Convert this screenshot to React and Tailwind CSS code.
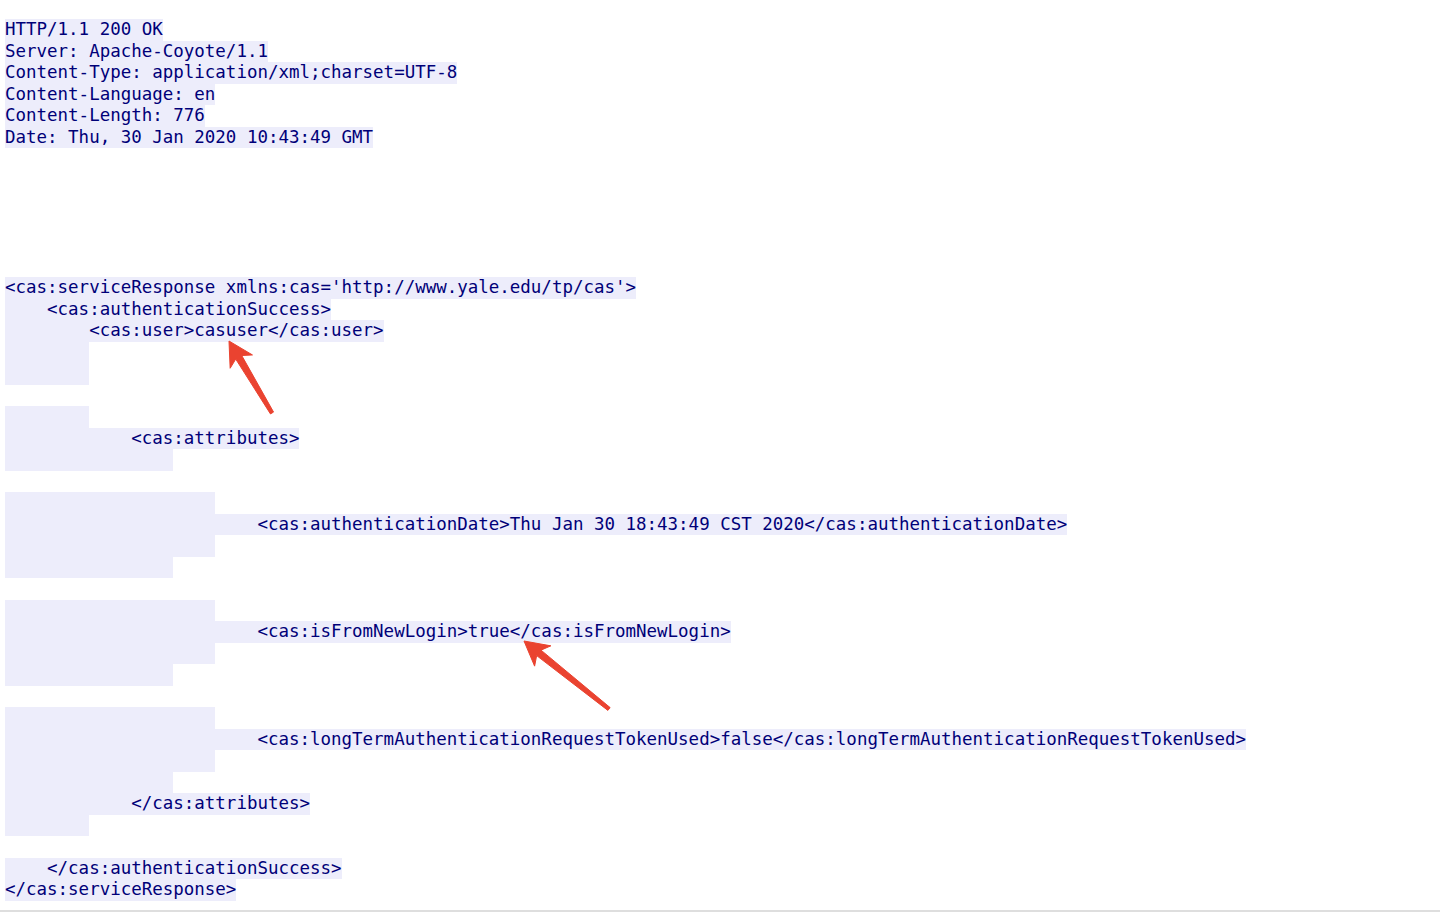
import React from 'react';

const sp = (n) => ' '.repeat(n);

// [text, highlighted]
const lines = [
  ['HTTP/1.1 200 OK', true],
  ['Server: Apache-Coyote/1.1', true],
  ['Content-Type: application/xml;charset=UTF-8', true],
  ['Content-Language: en', true],
  ['Content-Length: 776', true],
  ['Date: Thu, 30 Jan 2020 10:43:49 GMT', true],
  ['', false],
  ['', false],
  ['', false],
  ['', false],
  ['', false],
  ['', false],
  ["<cas:serviceResponse xmlns:cas='http://www.yale.edu/tp/cas'>", true],
  [sp(4) + '<cas:authenticationSuccess>', true],
  [sp(8) + '<cas:user>casuser</cas:user>', true],
  [sp(8), true],
  [sp(8), true],
  ['', false],
  [sp(8), true],
  [sp(12) + '<cas:attributes>', true],
  [sp(16), true],
  ['', false],
  [sp(20), true],
  [sp(24) + '<cas:authenticationDate>Thu Jan 30 18:43:49 CST 2020</cas:authenticationDate>', true],
  [sp(20), true],
  [sp(16), true],
  ['', false],
  [sp(20), true],
  [sp(24) + '<cas:isFromNewLogin>true</cas:isFromNewLogin>', true],
  [sp(20), true],
  [sp(16), true],
  ['', false],
  [sp(20), true],
  [sp(24) + '<cas:longTermAuthenticationRequestTokenUsed>false</cas:longTermAuthenticationRequestTokenUsed>', true],
  [sp(20), true],
  [sp(16), true],
  [sp(12) + '</cas:attributes>', true],
  [sp(8), true],
  ['', false],
  [sp(4) + '</cas:authenticationSuccess>', true],
  ['</cas:serviceResponse>', true],
];

// arrow polygon: tip, tail in page pixels
function arrowPoints(tip, tail, headLen = 24, headHalf = 13, neckHalf = 3.5, tailHalf = 1.8) {
  const dx = tail[0] - tip[0];
  const dy = tail[1] - tip[1];
  const len = Math.hypot(dx, dy);
  const ux = dx / len;
  const uy = dy / len;
  const px = -uy;
  const py = ux;
  const base = [tip[0] + ux * headLen, tip[1] + uy * headLen];
  const neck = [tip[0] + ux * (headLen - 5), tip[1] + uy * (headLen - 5)];
  const pts = [
    [tail[0] + px * tailHalf, tail[1] + py * tailHalf],
    [neck[0] + px * neckHalf, neck[1] + py * neckHalf],
    [base[0] + px * headHalf, base[1] + py * headHalf],
    tip,
    [base[0] - px * headHalf, base[1] - py * headHalf],
    [neck[0] - px * neckHalf, neck[1] - py * neckHalf],
    [tail[0] - px * tailHalf, tail[1] - py * tailHalf],
  ];
  return pts.map((p) => p.join(',')).join(' ');
}

const Arrows = () => (
  <svg className="absolute left-0 top-0 pointer-events-none" width="1440" height="912">
    <polygon points={arrowPoints([229, 341], [272, 413])} fill="#ea4330" strokeLinejoin="round" stroke="#ea4330" strokeWidth="1" />
    <polygon points={arrowPoints([524, 641], [609, 709])} fill="#ea4330" strokeLinejoin="round" stroke="#ea4330" strokeWidth="1" />
  </svg>
);

const App = () => {
  return (
    <div className="relative h-[912px] w-[1440px] bg-white flex flex-col overflow-hidden">
      <div className="flex-1 pt-[19px] pl-[5px] font-['DejaVu_Sans_Mono','Liberation_Mono',monospace] text-[17.48px] leading-[21.5px] text-[#000078]">
        {lines.map(([text, hl], i) => (
          <div
            key={i}
            className={hl ? 'w-fit h-[21.5px] whitespace-pre bg-[#ededfb]' : 'h-[21.5px] whitespace-pre'}
          >
            {text}
          </div>
        ))}
      </div>
      <div className="h-[2px] bg-[#dedede]" />
      <Arrows />
    </div>
  );
};

export default App;
